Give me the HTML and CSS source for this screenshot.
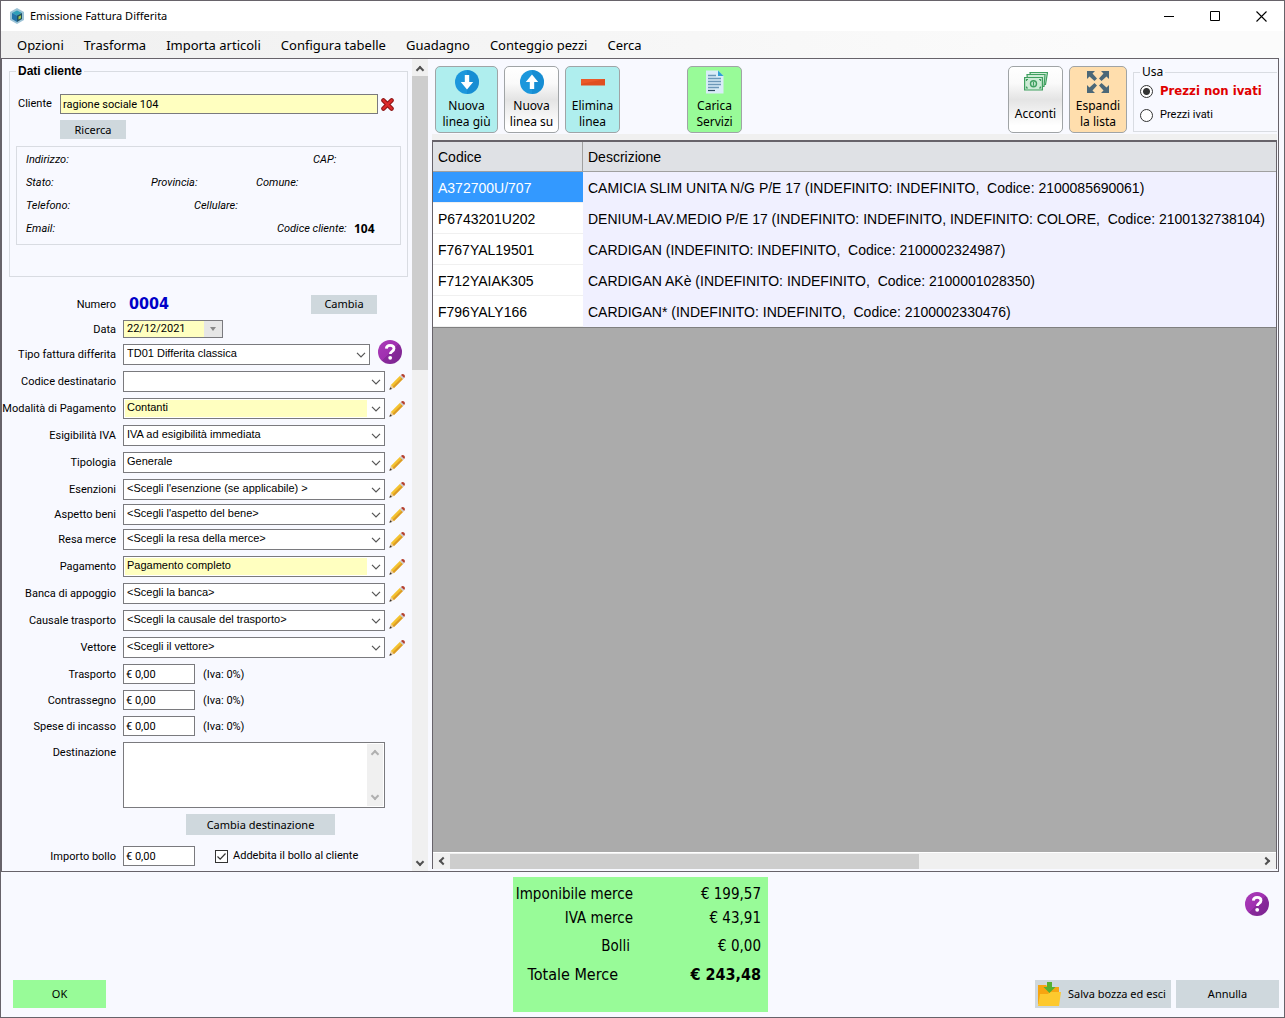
FILE: index.html
```html
<!DOCTYPE html>
<html lang="it">
<head>
<meta charset="utf-8">
<title>Emissione Fattura Differita</title>
<link rel="stylesheet" href="styles.css">
</head>
<body>
<svg class="sprite" aria-hidden="true">
  <defs>
    <linearGradient id="purple" x1="0" y1="0" x2="1" y2="1">
      <stop offset="0" stop-color="#a93cb8"/><stop offset=".5" stop-color="#a030b0"/><stop offset=".5" stop-color="#8a2a9c"/><stop offset="1" stop-color="#7b2490"/>
    </linearGradient>
    <symbol id="pencil" viewBox="0 0 16 16">
      <path d="M.4 15.800 1.800 11 5 14z" fill="#e8c9a0"/>
      <path d="M.4 15.800 1.200 13.200 3 15z" fill="#333"/>
      <path d="M1.800 11 11 1.800l3.200 3L5 14z" fill="#f4c22f"/>
      <path d="M3.600 12.600 12.800 3.400l1.400 1.400L5 14z" fill="#dc9b28"/>
      <path d="M10.800 2 12 .9 15.200 4 14 5.200z" fill="#c9cdd0"/>
      <path d="M12 .9C13-.2 14.400-.1 15.300.8S16.200 3 15.200 4z" fill="#b5402f"/>
    </symbol>
    <symbol id="help" viewBox="0 0 24 24">
      <circle cx="12" cy="12" r="12" fill="url(#purple)"/>
      <path d="M8.300 8.700C8.500 6.400 10 5.400 12.100 5.400c2.300 0 3.900 1.200 3.900 3.200 0 2.900-3.500 2.700-3.700 5.400" fill="none" stroke="#fff" stroke-width="2.800"/>
      <circle cx="12.200" cy="17.800" r="1.900" fill="#fff"/>
    </symbol>
  </defs>
</svg>
<div class="window">
  <header class="titlebar">
    <svg class="app-icon" viewBox="0 0 16 16" aria-hidden="true">
      <path d="M8 0 15 4v8l-7 4-7-4V4z" fill="#9cc3d6"/>
      <path d="M8 2.500 13 5 8 7.600 3 5z" fill="#2f9fb8"/>
      <path d="M3 5 8 7.600V14L3 11z" fill="#2273a8"/>
      <path d="M13 5 8 7.600V14l5-3z" fill="#1f4f63"/>
      <path d="M9.500 8.500 12 7.200v3L9.500 11.500z" fill="#a9c74a"/>
    </svg>
    <h1 class="title">Emissione Fattura Differita</h1>
    <div class="win-controls">
      <button type="button" aria-label="Riduci a icona"><svg viewBox="0 0 11 11"><path d="M0 5.500h10" stroke="#000"/></svg></button>
      <button type="button" aria-label="Ingrandisci"><svg viewBox="0 0 11 11"><path d="M.5.5h9v9h-9z" fill="none" stroke="#000"/></svg></button>
      <button type="button" aria-label="Chiudi"><svg viewBox="0 0 11 11"><path d="M.5.5l10 10M10.500.5l-10 10" stroke="#000" stroke-width="1.100"/></svg></button>
    </div>
  </header>
  <nav class="menubar">
    <button type="button">Opzioni</button><button type="button">Trasforma</button><button type="button">Importa articoli</button><button type="button">Configura tabelle</button><button type="button">Guadagno</button><button type="button">Conteggio pezzi</button><button type="button">Cerca</button>
  </nav>

  <main class="workspace">
    <section class="side">
      <form class="side-form">
        <fieldset class="client">
          <legend>Dati cliente</legend>
          <div class="client-row">
            <label for="cliente">Cliente</label>
            <input id="cliente" class="required" type="text" value="ragione sociale 104">
            <button class="clear" type="button" aria-label="Rimuovi cliente"><svg viewBox="0 0 12 12"><path d="M2.200 2.200l7.600 7.600M9.800 2.200 2.200 9.800" stroke="#8c1414" stroke-width="4" stroke-linecap="round"/><path d="M2.200 2.200l7.600 7.600M9.800 2.200 2.200 9.800" stroke="#dc2a2a" stroke-width="2.200" stroke-linecap="round"/></svg></button>
          </div>
          <button class="btn btn-small search" type="button">Ricerca</button>
          <div class="details">
            <div class="details-row"><span class="d-wide">Indirizzo:</span><span>CAP:</span></div>
            <div class="details-row"><span class="d-stato">Stato:</span><span class="d-prov">Provincia:</span><span>Comune:</span></div>
            <div class="details-row"><span class="d-tel">Telefono:</span><span>Cellulare:</span></div>
            <div class="details-row"><span class="d-mail">Email:</span><span>Codice cliente:</span><b>104</b></div>
          </div>
        </fieldset>

        <div class="fields">
          <div class="row"><span class="lbl">Numero</span><output class="number">0004</output><button class="btn btn-small push" type="button">Cambia</button></div>
          <div class="row"><label class="lbl" for="data">Data</label><span class="date"><input id="data" type="text" value="22/12/2021"><button type="button" aria-label="Apri calendario"></button></span></div>
          <div class="row"><label class="lbl" for="tipo">Tipo fattura differita</label><select id="tipo" class="short"><option>TD01 Differita classica</option></select><button class="icon-btn help" type="button" aria-label="Aiuto"><svg><use href="#help"/></svg></button></div>
          <div class="row"><label class="lbl" for="dest">Codice destinatario</label><select id="dest"><option></option></select><button class="icon-btn" type="button" aria-label="Modifica"><svg><use href="#pencil"/></svg></button></div>
          <div class="row"><label class="lbl" for="mod">Modalità di Pagamento</label><select id="mod" class="required"><option>Contanti</option></select><button class="icon-btn" type="button" aria-label="Modifica"><svg><use href="#pencil"/></svg></button></div>
          <div class="row"><label class="lbl" for="esig">Esigibilità IVA</label><select id="esig"><option>IVA ad esigibilità immediata</option></select></div>
          <div class="row"><label class="lbl" for="tipologia">Tipologia</label><select id="tipologia"><option>Generale</option></select><button class="icon-btn" type="button" aria-label="Modifica"><svg><use href="#pencil"/></svg></button></div>
          <div class="tight">
            <div class="row"><label class="lbl" for="esenz">Esenzioni</label><select id="esenz"><option>&lt;Scegli l'esenzione (se applicabile) &gt;</option></select><button class="icon-btn" type="button" aria-label="Modifica"><svg><use href="#pencil"/></svg></button></div>
            <div class="row"><label class="lbl" for="aspetto">Aspetto beni</label><select id="aspetto"><option>&lt;Scegli l'aspetto del bene&gt;</option></select><button class="icon-btn" type="button" aria-label="Modifica"><svg><use href="#pencil"/></svg></button></div>
            <div class="row"><label class="lbl" for="resa">Resa merce</label><select id="resa"><option>&lt;Scegli la resa della merce&gt;</option></select><button class="icon-btn" type="button" aria-label="Modifica"><svg><use href="#pencil"/></svg></button></div>
          </div>
          <div class="row"><label class="lbl" for="pag">Pagamento</label><select id="pag" class="required"><option>Pagamento completo</option></select><button class="icon-btn" type="button" aria-label="Modifica"><svg><use href="#pencil"/></svg></button></div>
          <div class="row"><label class="lbl" for="banca">Banca di appoggio</label><select id="banca"><option>&lt;Scegli la banca&gt;</option></select><button class="icon-btn" type="button" aria-label="Modifica"><svg><use href="#pencil"/></svg></button></div>
          <div class="row"><label class="lbl" for="causale">Causale trasporto</label><select id="causale"><option>&lt;Scegli la causale del trasporto&gt;</option></select><button class="icon-btn" type="button" aria-label="Modifica"><svg><use href="#pencil"/></svg></button></div>
          <div class="row"><label class="lbl" for="vettore">Vettore</label><select id="vettore"><option>&lt;Scegli il vettore&gt;</option></select><button class="icon-btn" type="button" aria-label="Modifica"><svg><use href="#pencil"/></svg></button></div>
          <div class="row"><label class="lbl" for="trasporto">Trasporto</label><input id="trasporto" class="money" type="text" value="€ 0,00"><span class="vat">(Iva: 0%)</span></div>
          <div class="row"><label class="lbl" for="contr">Contrassegno</label><input id="contr" class="money" type="text" value="€ 0,00"><span class="vat">(Iva: 0%)</span></div>
          <div class="row"><label class="lbl" for="spese">Spese di incasso</label><input id="spese" class="money" type="text" value="€ 0,00"><span class="vat">(Iva: 0%)</span></div>
          <div class="row row-top"><label class="lbl" for="destinazione">Destinazione</label><span class="area"><textarea id="destinazione"></textarea><span class="area-bar"><i class="chev up"></i><i class="chev down"></i></span></span></div>
          <button class="btn change-dest" type="button">Cambia destinazione</button>
          <div class="row stamp"><label class="lbl" for="bollo">Importo bollo</label><input id="bollo" class="money" type="text" value="€ 0,00"><label class="check"><input type="checkbox" checked>Addebita il bollo al cliente</label></div>
        </div>
      </form>
      <div class="vbar"><i class="chev up"></i><span class="vthumb"></span><i class="chev down"></i></div>
    </section>

    <section class="content">
      <div class="toolbar">
        <button class="tool cyan wide" type="button"><svg viewBox="0 0 24 24"><circle cx="12" cy="12" r="12" fill="#1c97dc"/><path d="M12 0a12 12 0 0 1 0 24z" fill="#0f83c9" opacity=".5"/><path d="M9.800 5h4.400v7h4L12 19.500 5.800 12h4z" fill="#fff"/></svg><span>Nuova<br>linea giù</span></button>
        <button class="tool plain" type="button"><svg viewBox="0 0 24 24"><circle cx="12" cy="12" r="12" fill="#1c97dc"/><path d="M12 0a12 12 0 0 1 0 24z" fill="#0f83c9" opacity=".5"/><path d="M9.800 19h4.400v-7h4L12 4.500 5.800 12h4z" fill="#fff"/></svg><span>Nuova<br>linea su</span></button>
        <button class="tool cyan" type="button"><svg viewBox="0 0 24 24"><path d="M0 9h24v6.500H0z" fill="#e04e20"/><path d="M0 9h24L0 14z" fill="#f26030" opacity=".6"/></svg><span>Elimina<br>linea</span></button>
        <button class="tool green" type="button"><svg viewBox="0 0 24 24"><path d="M3 .5h12l5.500 5.500v17.500H3z" fill="#d9ecf8"/><path d="M15 .5l5.500 5.500H15z" fill="#2f9fd6"/><path d="M5 5.500h8M5 8.500h13M5 11.500h13M5 14.500h13M5 17.500h11" stroke="#6c98b8" stroke-width="1.300"/><path d="M5 20.500h7" stroke="#2d4a60" stroke-width="1.200"/></svg><span>Carica<br>Servizi</span></button>
        <button class="tool plain single" type="button"><svg viewBox="0 0 24 24"><g fill="#cdebd5" stroke="#3f9f5f" stroke-width="1.200"><path d="M6 2.500h17.500l-2 12H8z"/><path d="M3 4.500h18l-1 12H4z"/><path d="M.6 7.500h17.800v12.500H.6z"/></g><circle cx="9.500" cy="13.700" r="3" fill="none" stroke="#3f9f5f" stroke-width="1.400"/><path d="M9.500 11.700v4M2.500 11V9.500H4M15 9.500h1.500V11M2.500 16.500V18H4M15 18h1.500v-1.500" stroke="#3f9f5f" stroke-width="1.200" fill="none"/></svg><span>Acconti</span></button>
        <button class="tool peach" type="button"><svg viewBox="0 0 24 24"><path id="arrow" d="M1 1h8L6.500 3.500 11 8.500 8.500 11 3.500 6.500 1 9z" fill="#4c6878"/><use href="#arrow" transform="rotate(90 12 12)"/><use href="#arrow" transform="rotate(180 12 12)"/><use href="#arrow" transform="rotate(270 12 12)"/></svg><span>Espandi<br>la lista</span></button>
        <fieldset class="prices">
          <legend>Usa</legend>
          <label class="active"><input type="radio" name="prezzi" checked>Prezzi non ivati</label>
          <label><input type="radio" name="prezzi">Prezzi ivati</label>
        </fieldset>
      </div>
      <div class="grid">
        <table>
          <thead><tr><th class="code">Codice</th><th>Descrizione</th></tr></thead>
          <tbody>
            <tr class="selected"><td>A372700U/707</td><td>CAMICIA SLIM UNITA N/G P/E 17 (INDEFINITO: INDEFINITO,&nbsp; Codice: 2100085690061)</td></tr>
            <tr><td>P6743201U202</td><td>DENIUM-LAV.MEDIO P/E 17 (INDEFINITO: INDEFINITO, INDEFINITO: COLORE,&nbsp; Codice: 2100132738104)</td></tr>
            <tr><td>F767YAL19501</td><td>CARDIGAN (INDEFINITO: INDEFINITO,&nbsp; Codice: 2100002324987)</td></tr>
            <tr><td>F712YAIAK305</td><td>CARDIGAN AKè (INDEFINITO: INDEFINITO,&nbsp; Codice: 2100001028350)</td></tr>
            <tr><td>F796YALY166</td><td>CARDIGAN* (INDEFINITO: INDEFINITO,&nbsp; Codice: 2100002330476)</td></tr>
          </tbody>
        </table>
        <div class="hbar"><i class="chev left"></i><span class="htrack"><span class="hthumb"></span></span><i class="chev right"></i></div>
      </div>
    </section>
  </main>

  <footer class="footer">
    <div class="foot-left"><button class="btn ok" type="button">OK</button></div>
    <dl class="totals">
      <div><dt>Imponibile merce</dt><dd>€ 199,57</dd></div>
      <div class="t-vat"><dt>IVA merce</dt><dd>€ 43,91</dd></div>
      <div class="t-stamp"><dt>Bolli</dt><dd>€ 0,00</dd></div>
      <div class="t-total"><dt>Totale Merce</dt><dd>€ 243,48</dd></div>
    </dl>
    <div class="foot-right">
      <button class="icon-btn help" type="button" aria-label="Aiuto"><svg><use href="#help"/></svg></button>
      <div class="actions">
        <button class="btn save" type="button"><svg viewBox="0 0 24 24" aria-hidden="true"><path d="M1 3h8l2 2h11v17H1z" fill="#f7a511"/><path d="M3 12h8l2-2h11l-2 14H1z" fill="#fdc92e"/><path d="M10 0h5v5h3.500L12.500 11 6.500 5H10z" fill="#55b030"/></svg>Salva bozza ed esci</button>
        <button class="btn cancel" type="button">Annulla</button>
      </div>
    </div>
  </footer>
</div>
</body>
</html>
```
FILE: styles.css
```css
:root {
  --ui: "Noto Sans", "Open Sans", sans-serif;
  --label: Roboto, "Noto Sans", sans-serif;
  --tahoma: "DejaVu Sans Condensed", "Noto Sans", sans-serif;
  --sans: "Liberation Sans", Arial, sans-serif;
  --page: #f8f9ff;
  --button: #cfd8dd;
  --edge: #7a7a7e;
  --yellow: #ffffc0;
}
* { box-sizing: border-box; }
body { margin: 0; background: var(--page); color: #000; font: 11px/14px var(--label); }
button, input, select, textarea { font: inherit; color: inherit; margin: 0; padding: 0; border: 0; border-radius: 0; background: none; }
svg { display: block; }
.sprite { position: absolute; width: 0; height: 0; }

.window { display: flex; flex-direction: column; min-height: 100vh; border: 1px solid #67636a; }
.titlebar { display: flex; align-items: center; height: 30px; padding-left: 8px; background: #fff; }
.app-icon { width: 16px; height: 16px; margin-right: 5px; }
.title { flex: 1; margin: 0; font: 11px/16px var(--ui); }
.win-controls { display: flex; }
.win-controls button { width: 46px; height: 30px; display: grid; place-items: center; }
.win-controls svg { width: 11px; height: 11px; }
.menubar { display: flex; height: 27px; padding-left: 6px; background: linear-gradient(90deg, #f0f0f0, #fbfbfb 85%); }
.menubar button { padding: 0 10px; font: 13px/28px var(--ui); }

.workspace { display: flex; flex: 1; margin-right: 5px; border: 1px solid #67636a; }
.side { display: flex; width: 426px; }
.side-form { flex: 1; }
.client { margin: 4px 4px 0 7px; padding: 14px 6px 31px; border: 1px solid #d9dce2; min-width: 0; }
.client legend { margin-left: 0; padding: 0 2px; font: bold 12px/17px var(--sans); }
.client-row { display: flex; align-items: center; height: 20px; padding-right: 5px; }
.client-row label { width: 44px; padding-left: 2px; }
.client-row input { flex: 1; height: 20px; padding: 0 2px; border: 1px solid var(--edge); background: var(--yellow); }
.clear { width: 18px; height: 18px; display: grid; place-items: center; }
.clear svg { width: 13px; height: 13px; }
.btn { background: var(--button); font: 11px/16px var(--ui); text-align: center; }
.btn-small { width: 66px; height: 19px; }
.search { display: block; margin: 6px 0 7px 44px; }
.details { display: flex; flex-direction: column; gap: 7px; height: 99px; padding: 5px 9px; border: 1px solid #d9dce2; font: italic 11px/16px var(--label); }
.details-row { display: flex; }
.details b { margin-left: 7px; font: bold 12px/16px var(--ui); }
.d-wide { width: 287px; }
.d-stato { width: 125px; }
.d-prov { width: 105px; }
.d-tel { width: 168px; }
.d-mail { width: 251px; }
.details span { flex: none; }
.d-mail + span { width: 70px; }

.fields { display: flex; flex-direction: column; gap: 6px; margin-top: 17px; padding-right: 6px; }
.row { display: flex; align-items: center; }
.lbl { width: 121px; padding: 1px 7px 0 0; text-align: right; white-space: nowrap; }
.number { margin-left: 6px; color: #0000c8; font: bold 16px/20px var(--tahoma); }
.push { margin: 0 29px 0 auto; }
.date { display: flex; width: 100px; height: 18px; border: 1px solid var(--edge); background: var(--yellow); }
.date input { width: 80px; padding-left: 3px; }
.date button { flex: 1; background: #e6e6e6 url("data:image/svg+xml,%3Csvg xmlns='http://www.w3.org/2000/svg' width='6' height='4'%3E%3Cpath d='M0 0h6L3 4z' fill='%23888'/%3E%3C/svg%3E") center no-repeat; }
select {
  --arrow: url("data:image/svg+xml,%3Csvg xmlns='http://www.w3.org/2000/svg' width='10' height='6'%3E%3Cpath d='M1 .8l4 4 4-4' fill='none' stroke='%23555' stroke-width='1.200'/%3E%3C/svg%3E");
  appearance: none; width: 262px; height: 21px; padding: 0 20px 3px 3px; border: 1px solid var(--edge);
  background: #fff var(--arrow) right 3px center no-repeat;
  font: 11px/16px var(--sans);
}
select.required { box-shadow: inset 0 0 0 1px #fff; background-image: var(--arrow), linear-gradient(90deg, var(--yellow) 243px, #fff 243px); background-position: right 3px center, left; }
select.short { width: 247px; }
.icon-btn { width: 16px; height: 16px; margin-left: 4px; }
.icon-btn svg { width: 100%; height: 100%; }
.help { width: 24px; height: 24px; margin: -6px 0 -1px 8px; }
.tight { display: flex; flex-direction: column; gap: 4px; }
.money { width: 72px; height: 20px; padding: 0 2px; border: 1px solid var(--edge); background: #fff; font: 11px/16px var(--label); }
.vat { margin-left: 8px; padding-top: 1px; }
.row-top { align-items: flex-start; }
.row-top .lbl { padding-top: 4px; }
.area { display: flex; width: 262px; height: 66px; padding: 1px; border: 1px solid var(--edge); background: #fff; }
.area textarea { flex: 1; resize: none; outline: 0; }
.area-bar { display: flex; flex-direction: column; justify-content: space-between; align-items: center; width: 16px; padding: 7px 0; background: #f0f0f0; color: #b0b0b0; }
.change-dest { width: 149px; height: 21px; margin-left: 184px; }
.stamp { margin-top: 5px; }
.check { display: flex; align-items: center; gap: 5px; margin-left: 20px; }
.check input { appearance: none; width: 13px; height: 13px; border: 1px solid #333; background: #fff url("data:image/svg+xml,%3Csvg xmlns='http://www.w3.org/2000/svg' width='11' height='11'%3E%3Cpath d='M1.500 5.500l2.700 2.700 5.300-5.700' fill='none' stroke='%23333' stroke-width='1.200'/%3E%3C/svg%3E") center no-repeat; }

.chev { display: block; width: 6px; height: 6px; border: solid currentColor; border-width: 2px 2px 0 0; transform: rotate(-45deg); }
.chev.down { transform: rotate(135deg); }
.chev.left { transform: rotate(-135deg); }
.chev.right { transform: rotate(45deg); }
.vbar { display: flex; flex-direction: column; align-items: center; width: 16px; padding: 8px 0 6px; background: #f0f0f0; color: #505050; }
.vthumb { width: 100%; height: 294px; margin: 3px 0 auto; background: #cdcdcd; }

.content { display: flex; flex: 1; flex-direction: column; min-width: 0; padding: 0 1px 2px 4px; }
.toolbar { display: flex; gap: 6px; height: 81px; padding: 7px 0 7px 3px; border-bottom: 6px solid #f0f0f0; }
.tool { display: flex; flex-direction: column; align-items: center; width: 55px; height: 67px; padding-top: 3px; border: 1px solid #a0a4a6; border-radius: 5px; font: 12px/16px var(--ui); }
.tool svg { width: 24px; height: 24px; margin-bottom: 4px; }
.wide { width: 63px; }
.cyan { background: #afeeee; }
.green { margin-left: 61px; background: #98fb98; }
.plain { background: linear-gradient(#fff, #fafafa 25%, #e4e4e4 50%, #fff 90%); }
.peach { width: 58px; background: #ffdead; }
.single { margin-left: auto; }
.single svg { margin-bottom: 12px; }
.prices { display: flex; flex-direction: column; width: 144px; height: 67px; margin: -1px 0 0; padding: 0 0 0 6px; border: 1px solid #d9dce2; border-right: 0; min-width: 0; }
.prices legend { padding: 0 2px; font: 12px/14px var(--ui); }
.prices label { display: flex; align-items: center; gap: 7px; height: 24px; }
.prices .active { color: #e00000; font: bold 13px/16px var(--tahoma); }
.prices input { appearance: none; width: 13px; height: 13px; border: 1px solid #333; border-radius: 50%; background: #fff; }
.prices input:checked { background: radial-gradient(circle, #333 3px, #fff 4px); }

.grid { display: flex; flex: 1; flex-direction: column; border: 1px solid #67636a; border-width: 2px 1px 0 1px; background: #ababab; }
table { width: 100%; border-collapse: separate; border-spacing: 0; border-bottom: 1px solid #808080; font: 14px/18px var(--sans); }
th { height: 30px; padding: 0 5px; border-bottom: 1px solid #a0a0a0; background: #dfe1e5; font-weight: normal; text-align: left; }
.code { width: 150px; border-right: 1px solid #a0a0a0; }
td { height: 31px; padding: 0 5px; background: #f0f0ff; white-space: nowrap; }
td:first-child { background: #fff; box-shadow: inset 0 -1px #f0f0f0; }
.selected td:first-child { background: #3399ff; color: #fff; }
.hbar { display: flex; align-items: center; height: 17px; margin-top: auto; padding: 0 7px; border-top: 1px solid #fff; background: #f0f0f0; color: #505050; }
.htrack { flex: 1; height: 15px; margin: 0 4px; }
.hthumb { display: block; width: 58%; height: 15px; background: #cdcdcd; }

.footer { display: grid; grid-template-columns: 1fr 255px 1fr; height: 145px; padding: 5px 5px 5px 1px; }
.foot-left { display: flex; align-items: flex-end; padding: 0 0 4px 11px; }
.ok { width: 93px; height: 28px; background: #98fb98; }
.totals { margin: 0; padding: 8px 7px 7px; background: #98fb98; font: 15px/18px var(--tahoma); }
.totals div { display: flex; justify-content: space-between; }
.totals dt { display: flex; justify-content: flex-end; width: 113px; white-space: nowrap; }
.totals dd { margin: 0; }
.t-vat { margin-top: 6px; }
.t-stamp { margin-top: 10px; }
.t-total { margin-top: 11px; font-size: 16px; }
.totals .t-stamp dt { padding-right: 3px; }
.totals .t-total dt { padding-right: 15px; }
.t-total dd { font-weight: bold; }
.foot-right { display: flex; flex-direction: column; justify-content: space-between; align-items: flex-end; padding-bottom: 4px; }
.foot-right .help { margin: 15px 10px 0 0; }
.actions { display: flex; gap: 5px; }
.save { display: flex; align-items: center; gap: 7px; width: 136px; height: 28px; padding-left: 2px; white-space: nowrap; }
.save svg { width: 24px; height: 24px; flex: none; }
.cancel { width: 103px; height: 28px; }
```
